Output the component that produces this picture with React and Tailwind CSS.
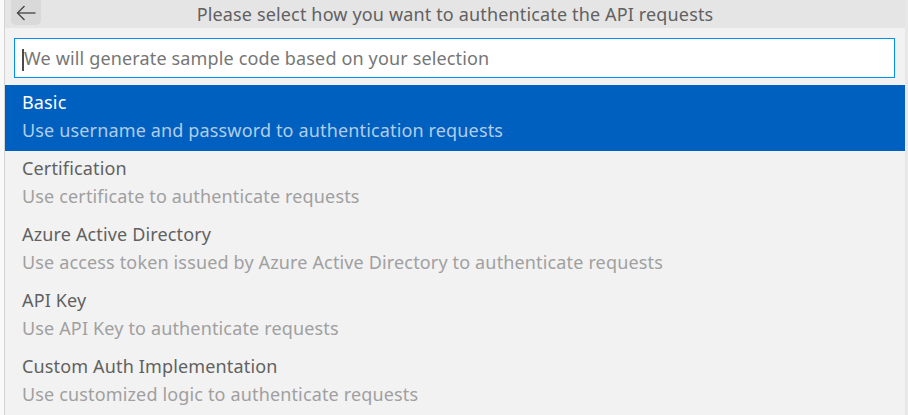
// App.jsx
// quick pick: choose the auth method for generated API sample code

import React, { useState } from 'react';

const OPTIONS = [
  { label: 'Basic', detail: 'Use username and password to authentication requests' },
  { label: 'Certification', detail: 'Use certificate to authenticate requests' },
  { label: 'Azure Active Directory', detail: 'Use access token issued by Azure Active Directory to authenticate requests' },
  { label: 'API Key', detail: 'Use API Key to authenticate requests' },
  { label: 'Custom Auth Implementation', detail: 'Use customized logic to authenticate requests' },
];

const BackArrow = () => (
  <svg width="20" height="16" viewBox="0 0 20 16" fill="none" stroke="#424242" strokeWidth="1.3">
    <path d="M19.5 8H1.5" />
    <path d="M8.5 1L1.5 8l7 7" />
  </svg>
);

const App = () => {
  const [active, setActive] = useState(0);
  const [query, setQuery] = useState('');

  return (
    <div
      className="flex h-[415px] w-[908px] overflow-hidden bg-white tracking-[0.15px]"
      style={{ fontFamily: '"Noto Sans", "Open Sans", sans-serif' }}
    >
      {/* editor gutter peeking out on the left */}
      <div className="w-[5px] shrink-0 border-r border-[#d4d4d4] bg-[#fafafa]" />

      <div className="flex w-[900px] shrink-0 flex-col bg-[#f2f2f2]">
        <div className="relative flex h-[28px] shrink-0 items-center justify-center overflow-hidden bg-[#e5e5e5]">
          <button className="absolute left-[6px] top-[-5px] flex h-[30px] w-[30px] items-center justify-center rounded-[5px] bg-[#d9d9d9] pt-[5px]">
            <BackArrow />
          </button>
          <span className="text-[18px] leading-[28px] text-[#616161]">
            Please select how you want to authenticate the API requests
          </span>
        </div>

        <div className="relative pt-[10px] pb-[7px] pl-[9px] pr-[10px]">
          <input
            value={query}
            onChange={(e) => setQuery(e.target.value)}
            placeholder="We will generate sample code based on your selection"
            className="h-[40px] w-full border border-[#0090f1] bg-white pl-[9px] pr-[8px] text-[18px] text-[#616161] outline-none placeholder:text-[#767676]"
          />
          {/* text caret */}
          <span className="absolute left-[17px] top-[21px] h-[22px] w-[2px] bg-[#4a4a4a]" />
        </div>

        <ul className="flex flex-col">
          {OPTIONS.map((o, i) => (
            <li
              key={o.label}
              onMouseEnter={() => setActive(i)}
              className={
                i === active
                  ? 'h-[66px] bg-[#0060c0] pl-[17px] pt-[3px]'
                  : 'h-[66px] pl-[17px] pt-[3px]'
              }
            >
              <div className={i === active ? 'text-[18px] leading-[28px] text-white' : 'text-[18px] leading-[28px] text-[#616161]'}>
                {o.label}
              </div>
              <div className={i === active ? 'text-[18px] leading-[28px] text-[#b0cdea]' : 'text-[18px] leading-[28px] text-[#a0a0a0]'}>
                {o.detail}
              </div>
            </li>
          ))}
        </ul>
      </div>

      {/* scrollbar edge on the right */}
      <div className="w-[3px] shrink-0 bg-[#e8e8e8]" />
    </div>
  );
};

export default App;
